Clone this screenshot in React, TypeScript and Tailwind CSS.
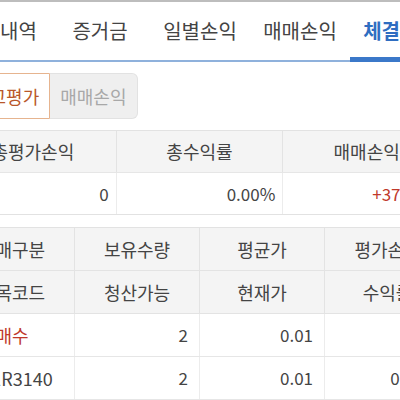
const tabs = ["잔고내역", "증거금", "일별손익", "매매손익", "체결내역"];

const summaryHead = ["총평가손익", "총수익률", "매매손익"];
const summaryVals: { v: string; red?: boolean }[] = [
  { v: "0" },
  { v: "0.00%" },
  { v: "+374,000", red: true },
];

const headRows = [
  ["매매구분", "보유수량", "평균가", "평가손익"],
  ["종목코드", "청산가능", "현재가", "수익률"],
];

const dataRows: { v: string; red?: boolean; center?: boolean; big?: boolean }[][] = [
  [{ v: "매수", red: true, center: true, big: true }, { v: "2" }, { v: "0.01" }, { v: "0" }],
  [{ v: "101R3140", center: true, big: true }, { v: "2" }, { v: "0.01" }, { v: "0.00%" }],
];

export default function App() {
  return (
    <div className="w-[400px] h-[400px] overflow-hidden bg-white font-['Noto_Sans_CJK_KR','Noto_Sans',sans-serif]">
      <div className="h-[2px] bg-[#bdbdbd]" />
      <div className="w-[500px] -ml-[50px]">
        {/* Tabs */}
        <div className="flex h-[60px] border-b-2 border-[#8fb1dc]">
          {tabs.map((t, i) => {
            const active = i === tabs.length - 1;
            return (
              <div
                key={t}
                className={`relative w-[100px] flex items-center justify-center text-[20px] whitespace-nowrap ${
                  active ? "text-[#2f6dc1] font-bold" : "text-[#444]"
                }`}
              >
                {t}
                {active && <div className="absolute left-0 right-0 -bottom-[2px] h-[5px] bg-[#3b78c9]" />}
              </div>
            );
          })}
        </div>

        {/* Toggle buttons */}
        <div className="flex mt-[11px] pl-[12px] h-[46px]">
          <div className="flex items-center px-[10px] border border-[#e6b48f] rounded-l-[6px] bg-white text-[18px] text-[#b9572a]">
            잔고평가
          </div>
          <div className="flex items-center px-[10px] border border-l-0 border-[#e2e2e2] rounded-r-[6px] bg-[#efefef] text-[18px] text-[#a8a8a8]">
            매매손익
          </div>
        </div>

        {/* Summary */}
        <div className="mt-[11px] border-t border-b border-[#e2e2e2]">
          <div className="grid grid-cols-3 h-[42px] bg-[#f4f4f4] border-b border-[#e6e6e6]">
            {summaryHead.map((h, i) => (
              <div
                key={h}
                className={`flex items-center justify-center text-[18px] text-[#444] ${i < 2 ? "border-r border-[#e3e3e3]" : ""}`}
              >
                {h}
              </div>
            ))}
          </div>
          <div className="grid grid-cols-3 h-[41px]">
            {summaryVals.map((c, i) => (
              <div
                key={i}
                className={`flex items-center justify-end pr-[7px] text-[17px] ${c.red ? "text-[#c0392b]" : "text-[#444]"} ${
                  i < 2 ? "border-r border-[#ececec]" : ""
                }`}
              >
                {c.v}
              </div>
            ))}
          </div>
        </div>

        {/* Detail */}
        <div className="mt-[12px] border-t border-[#e2e2e2]">
          {headRows.map((row, r) => (
            <div key={r} className="grid grid-cols-4 h-[43px] bg-[#f4f4f4] border-b border-[#e3e3e3]">
              {row.map((h, i) => (
                <div
                  key={h}
                  className={`flex items-center justify-center text-[18px] text-[#444] whitespace-nowrap ${
                    i < 3 ? "border-r border-[#e3e3e3]" : ""
                  }`}
                >
                  {h}
                </div>
              ))}
            </div>
          ))}
          {dataRows.map((row, r) => (
            <div key={r} className="grid grid-cols-4 h-[43px] border-b border-[#e6e6e6]">
              {row.map((c, i) => (
                <div
                  key={i}
                  className={`flex items-center whitespace-nowrap ${c.big ? "text-[18px]" : "text-[17px]"} ${
                    c.center ? "justify-center" : "justify-end pr-[11px]"
                  } ${c.red ? "text-[#c0392b]" : "text-[#444]"} ${i < 3 ? "border-r border-[#ececec]" : ""}`}
                >
                  {c.v}
                </div>
              ))}
            </div>
          ))}
        </div>
      </div>
    </div>
  );
}
